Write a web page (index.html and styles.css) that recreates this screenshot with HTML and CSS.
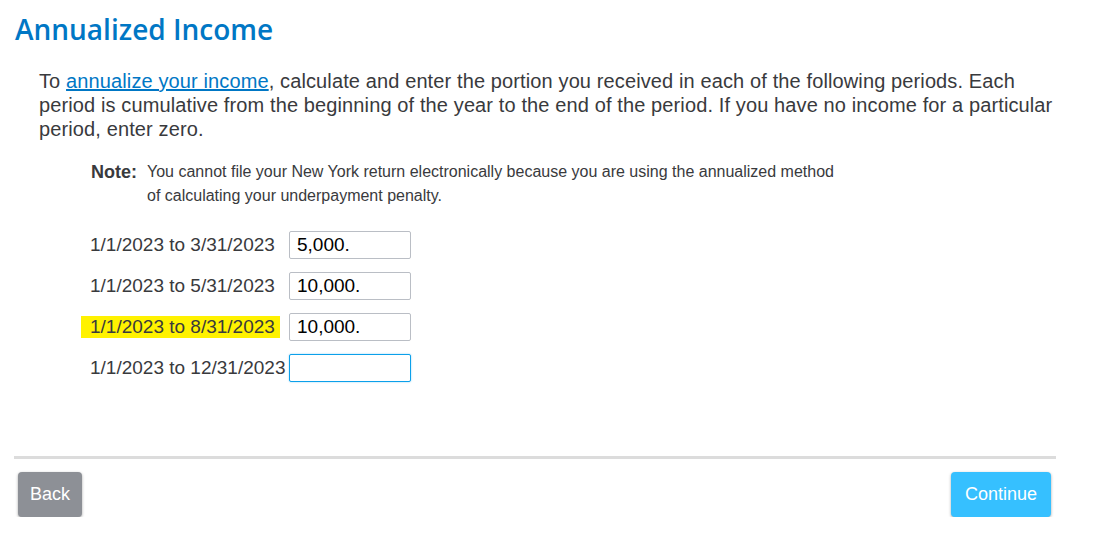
FILE: index.html
```html
<!DOCTYPE html>
<html>
<head>
<meta charset="utf-8">
<link rel="stylesheet" href="styles.css">
</head>
<body>
<div class="page">
  <h1 class="title">Annualized Income</h1>
  <p class="intro">To <a href="#" class="link">annualize your income</a>, calculate and enter the portion you received in each of the following periods. Each period is cumulative from the beginning of the year to the end of the period. If you have no income for a particular period, enter zero.</p>
  <div class="note">
    <span class="note-label">Note:</span>
    <span class="note-text">You cannot file your New York return electronically because you are using the annualized method of calculating your underpayment penalty.</span>
  </div>
  <div class="rows">
    <div class="row"><span class="label">1/1/2023 to 3/31/2023</span><input class="field" type="text" value="5,000."></div>
    <div class="row"><span class="label">1/1/2023 to 5/31/2023</span><input class="field" type="text" value="10,000."></div>
    <div class="row"><span class="label"><span class="hl">1/1/2023 to 8/31/2023</span></span><input class="field" type="text" value="10,000."></div>
    <div class="row"><span class="label">1/1/2023 to 12/31/2023</span><input class="field focus" type="text" value=""></div>
  </div>
  <div class="divider"></div>
  <div class="actions">
    <button class="btn back">Back</button>
    <button class="btn continue">Continue</button>
  </div>
</div>
</body>
</html>
```
FILE: styles.css
```css
html, body {
  margin: 0;
  padding: 0;
  background: #fff;
}
.page {
  padding: 0 0 0 14px;
  width: 1042px;
  font-family: "Liberation Sans", Arial, sans-serif;
  color: #393a3d;
}
.title {
  margin: 0;
  padding-top: 12px;
  padding-left: 1px;
  font-family: "Open Sans", Lato, sans-serif;
  font-weight: 600;
  font-size: 28px;
  line-height: 34px;
  color: #0077c5;
}
.intro {
  margin: 23px 0 0 25px;
  font-size: 20px;
  line-height: 24px;
  letter-spacing: 0.12px;
  width: 1025px;
}
.link {
  color: #0077c5;
  text-decoration: underline;
}
.note {
  display: flex;
  margin: 19px 0 0 77px;
}
.note-label {
  font-weight: bold;
  font-size: 18px;
  line-height: 24px;
  width: 56px;
  flex: none;
}
.note-text {
  font-size: 16px;
  line-height: 24px;
  width: 700px;
}
.rows {
  margin: 23px 0 0 76px;
  display: flex;
  flex-direction: column;
  gap: 13px;
}
.row {
  display: flex;
  align-items: center;
  height: 28px;
}
.label {
  width: 199px;
  font-size: 19px;
  line-height: 22px;
  white-space: nowrap;
}
.hl {
  display: inline-block;
  background: #fff200;
  padding: 0 5px 0 9px;
  margin-left: -9px;
}
.field {
  box-sizing: border-box;
  width: 122px;
  height: 28px;
  border: 1px solid #babec5;
  border-radius: 2px;
  padding: 0 7px;
  font-family: "Liberation Sans", Arial, sans-serif;
  font-size: 19px;
  color: #000;
  outline: none;
}
.field.focus {
  border-color: #0ca0ea;
  box-shadow: 0 0 2px #8fd0f5;
}
.divider {
  margin-top: 74px;
  height: 3px;
  background: #dcdcdc;
}
.actions {
  display: flex;
  justify-content: space-between;
  padding: 13px 5px 0 4px;
}
.btn {
  border: none;
  border-radius: 4px;
  color: #fff;
  font-family: "Liberation Sans", Arial, sans-serif;
  font-size: 18px;
  height: 45px;
  padding: 0;
  box-shadow: 0 1px 3px rgba(0,0,0,0.35);
}
.back {
  width: 64px;
  background: #8d9096;
}
.continue {
  width: 100px;
  background: #36c0ff;
}
```
